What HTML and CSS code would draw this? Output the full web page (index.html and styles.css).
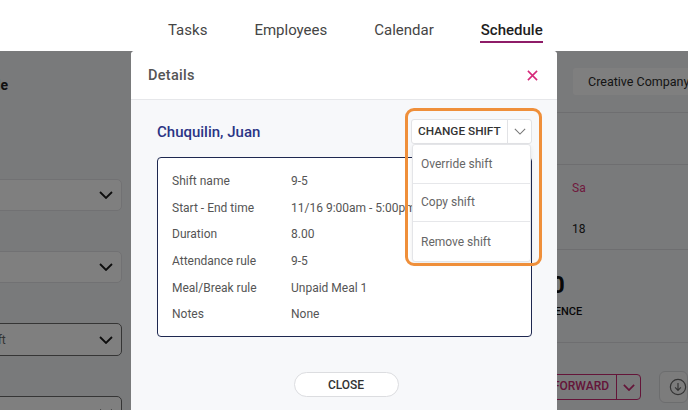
FILE: index.html
```html
<!DOCTYPE html>
<html lang="en">
<head>
<meta charset="utf-8">
<title>Schedule - Details</title>
<link rel="stylesheet" href="styles.css">
</head>
<body>
<div class="app">
  <header class="topnav">
    <nav class="tabs">
      <a class="tab">Tasks</a>
      <a class="tab">Employees</a>
      <a class="tab">Calendar</a>
      <a class="tab active">Schedule</a>
    </nav>
  </header>

  <main class="page">
    <aside class="sidebar">
      <div class="side-title"><span>Employee schedule</span></div>
      <div class="fields">
        <div class="field"><label>Location</label><div class="select"><span></span><svg class="chev" viewBox="0 0 14 8"><path d="M1 1l6 6 6-6"/></svg></div></div>
        <div class="field"><label>Department</label><div class="select"><span></span><svg class="chev" viewBox="0 0 14 8"><path d="M1 1l6 6 6-6"/></svg></div></div>
        <div class="field"><label>Shift</label><div class="select dark"><span>Select shift</span><svg class="chev" viewBox="0 0 14 8"><path d="M1 1l6 6 6-6"/></svg></div></div>
        <div class="field"><label>Rule</label><div class="select dark"><span></span><svg class="chev" viewBox="0 0 14 8"><path d="M1 1l6 6 6-6"/></svg></div></div>
      </div>
    </aside>

    <section class="content">
      <div class="toolbar"><button class="company">Creative Company</button></div>
      <div class="filters"></div>
      <div class="week">
        <div class="day"><span class="dname">Su</span><span class="dnum">12</span></div>
        <div class="day"><span class="dname">Mo</span><span class="dnum">13</span></div>
        <div class="day"><span class="dname">Tu</span><span class="dnum">14</span></div>
        <div class="day"><span class="dname">We</span><span class="dnum">15</span></div>
        <div class="day"><span class="dname">Th</span><span class="dnum">16</span></div>
        <div class="day"><span class="dname">Fr</span><span class="dnum">17</span></div>
        <div class="day"><span class="dname sat">Sa</span><span class="dnum">18</span></div>
      </div>
      <div class="stats">
        <div class="stat"><span class="snum">8</span><span class="slabel">ATTENDANCE</span></div>
        <div class="stat"><span class="snum">0</span><span class="slabel">ABSENCE</span></div>
      </div>
      <div class="actions">
        <div class="split"><span class="split-label">CARRY FORWARD</span><span class="split-arrow"><svg viewBox="0 0 14 8"><path d="M1 1l6 6 6-6"/></svg></span></div>
        <button class="download"><svg viewBox="0 0 20 20"><circle cx="10" cy="10" r="8.5"/><path d="M10 5.5v8M6.8 10.5L10 13.7l3.2-3.2"/></svg></button>
      </div>
    </section>
  </main>

  <div class="overlay"></div>

  <div class="modal">
    <div class="modal-head">
      <h2>Details</h2>
      <svg class="close-x" viewBox="0 0 12 12"><path d="M1 1l10 10M11 1L1 11"/></svg>
    </div>
    <div class="modal-body">
      <div class="name-row">
        <h3 class="emp-name">Chuquilin, Juan</h3>
        <div class="change-btn">
          <span class="change-label">CHANGE SHIFT</span>
          <span class="change-arrow"><svg viewBox="0 0 14 8"><path d="M1 1l6 6 6-6"/></svg></span>
        </div>
      </div>
      <div class="info">
        <div class="row"><span class="lbl">Shift name</span><span class="val">9-5</span></div>
        <div class="row"><span class="lbl">Start - End time</span><span class="val">11/16 9:00am - 5:00pm</span></div>
        <div class="row"><span class="lbl">Duration</span><span class="val">8.00</span></div>
        <div class="row"><span class="lbl">Attendance rule</span><span class="val">9-5</span></div>
        <div class="row"><span class="lbl">Meal/Break rule</span><span class="val">Unpaid Meal 1</span></div>
        <div class="row"><span class="lbl">Notes</span><span class="val">None</span></div>
      </div>
      <div class="foot"><button class="close-btn">CLOSE</button></div>

      <ul class="menu">
        <li>Override shift</li>
        <li>Copy shift</li>
        <li>Remove shift</li>
      </ul>
      <div class="highlight"></div>
    </div>
  </div>
</div>
</body>
</html>
```

FILE: styles.css
```css
* { box-sizing: border-box; }
html, body { margin: 0; padding: 0; }
body {
  font-family: Roboto, "Liberation Sans", Arial, sans-serif;
  background: #fff;
  width: 688px;
  height: 410px;
  overflow: hidden;
}
.app {
  position: relative;
  width: 688px;
  height: 410px;
  overflow: hidden;
}

/* top nav */
.topnav {
  height: 51px;
  background: #fff;
}
.tabs {
  display: flex;
  gap: 47px;
  padding-left: 168px;
  height: 51px;
}
.tab {
  position: relative;
  font-size: 15px;
  color: #454545;
  line-height: 18px;
  padding-top: 21px;
}
.tab.active {
  color: #1e1e1e;
  font-weight: 500;
}
.tab.active::after {
  content: "";
  position: absolute;
  left: -1px;
  right: 0;
  top: 41px;
  height: 2px;
  background: #8e1c68;
}

/* underlying page */
.page {
  display: flex;
  height: 359px;
  background: #f3f4f6;
}
.sidebar {
  flex: 0 0 331px;
  margin-left: -200px;
  padding-right: 9px;
}
.side-title {
  height: 62px;
  display: flex;
  align-items: center;
  justify-content: flex-end;
  padding-top: 6px;
  padding-right: 114px;
  font-size: 14px;
  font-weight: 700;
  color: #222;
  white-space: nowrap;
}
.fields {
  padding-top: 26px;
  padding-left: 20px;
}
.field label {
  display: flex;
  align-items: flex-end;
  height: 40px;
  padding-bottom: 6px;
  font-size: 12px;
  color: #444;
}
.select {
  height: 32px;
  border: 1px solid #e2e3e6;
  border-radius: 5px;
  background: #fff;
  display: flex;
  align-items: center;
  justify-content: space-between;
  padding: 0 8px 0 10px;
  font-size: 12px;
  color: #666;
}
.select.dark { border-color: #6a6a6a; height: 33px; }
.select span { padding-left: 115px; white-space: nowrap; }
.chev {
  width: 14px;
  height: 8px;
  fill: none;
  stroke: #1b1b1b;
  stroke-width: 1.8;
}

.content {
  flex: 1 1 auto;
  min-width: 0;
  display: flex;
  flex-direction: column;
}
.toolbar {
  height: 62px;
  border-bottom: 1px solid #dcdde0;
  padding: 17px 0 0 442px;
}
.company {
  height: 27px;
  width: 140px;
  border: none;
  border-radius: 3px;
  background: #fff;
  font-family: inherit;
  font-size: 12.5px;
  color: #2b2b2b;
  text-align: left;
  padding: 0 0 0 15px;
  white-space: nowrap;
}
.filters {
  height: 52px;
  border-bottom: 1px solid #dcdde0;
}
.week {
  height: 85px;
  border-bottom: 1px solid #dcdde0;
  display: grid;
  grid-template-columns: repeat(7, 62px);
  padding-left: 69px;
}
.day {
  display: flex;
  flex-direction: column;
  padding-top: 15px;
  font-size: 12px;
  color: #222;
}
.dname { height: 16px; line-height: 16px; }
.dname.sat { color: #e0347c; }
.dnum { margin-top: 25px; height: 16px; line-height: 16px; }
.stats {
  height: 93px;
  border-bottom: 1px solid #dcdde0;
  display: flex;
  padding-left: 317px;
  padding-top: 21px;
}
.stat {
  width: 72px;
  display: flex;
  flex-direction: column;
  align-items: center;
  margin-right: 2px;
}
.snum {
  font-size: 24px;
  font-weight: 700;
  color: #111;
  line-height: 28px;
}
.slabel {
  margin-top: 6px;
  font-size: 11px;
  line-height: 13px;
  font-weight: 500;
  color: #111;
}
.actions {
  display: flex;
  align-items: center;
  padding-left: 380px;
  padding-top: 28px;
  gap: 18px;
}
.split {
  display: flex;
  height: 26px;
  width: 131px;
  border: 1.5px solid #c92a72;
  border-radius: 4px;
  color: #c92a72;
}
.split-label {
  flex: 1;
  font-size: 12px;
  font-weight: 500;
  line-height: 23px;
  text-align: right;
  padding-right: 7px;
  white-space: nowrap;
}
.split-arrow {
  width: 24px;
  border-left: 1.5px solid #c92a72;
  display: flex;
  align-items: center;
  justify-content: center;
}
.split-arrow svg {
  width: 12px;
  height: 7px;
  fill: none;
  stroke: #c92a72;
  stroke-width: 2;
}
.download {
  width: 44px;
  height: 32px;
  border: 1px solid #d9dadd;
  border-radius: 6px;
  background: #f8f8f9;
  padding: 0 0 0 9px;
  display: flex;
  align-items: center;
}
.download svg {
  width: 18px;
  height: 18px;
  fill: none;
  stroke: #666;
  stroke-width: 1.3;
}

.overlay {
  position: absolute;
  left: 0;
  top: 51px;
  right: 0;
  bottom: 0;
  background: rgba(0, 0, 0, 0.5);
}

/* modal */
.modal {
  position: absolute;
  left: 131px;
  top: 51px;
  width: 426px;
  height: 390px;
  background: #f7f8fa;
  border-radius: 4px 4px 0 0;
}
.modal-head {
  height: 49px;
  background: #fff;
  border-bottom: 1px solid #e6e7ea;
  border-radius: 4px 4px 0 0;
  display: flex;
  align-items: center;
  justify-content: space-between;
  padding: 1px 19px 0 17px;
}
.modal-head h2 {
  margin: 0;
  font-size: 14.5px;
  font-weight: 500;
  letter-spacing: 0.3px;
  color: #555;
}
.close-x {
  width: 11px;
  height: 11px;
  fill: none;
  stroke: #d6287a;
  stroke-width: 1.7;
}
.modal-body {
  position: relative;
  padding: 19px 24px 0 26px;
}
.name-row {
  display: flex;
  align-items: center;
  justify-content: space-between;
  height: 25px;
}
.emp-name {
  margin: 0;
  font-size: 15px;
  font-weight: 500;
  color: #2b3485;
}
.change-btn {
  display: flex;
  height: 25px;
  width: 121px;
  margin-right: 1px;
  background: #fff;
  border: 1px solid #e2e3e6;
  border-radius: 3px;
}
.change-label {
  flex: 1;
  font-size: 11.8px;
  font-weight: 500;
  color: #333;
  line-height: 23px;
  padding-left: 6px;
  white-space: nowrap;
}
.change-arrow {
  width: 24px;
  border-left: 1px solid #e2e3e6;
  display: flex;
  align-items: center;
  justify-content: center;
}
.change-arrow svg {
  width: 12px;
  height: 7px;
  fill: none;
  stroke: #777;
  stroke-width: 1.3;
}
.info {
  margin-top: 13px;
  height: 180px;
  margin-right: 1px;
  border: 1px solid #1e2850;
  border-radius: 4px;
  background: #fff;
  padding: 10px 14px;
}
.row {
  display: flex;
  height: 26.6px;
  align-items: center;
  font-size: 12px;
  color: #555;
}
.lbl { width: 119px; flex: 0 0 119px; }
.val { white-space: nowrap; }
.foot {
  display: flex;
  justify-content: center;
  padding-top: 35px;
  padding-left: 2px;
}
.close-btn {
  width: 105px;
  height: 25px;
  border: 1px solid #dcdde0;
  border-radius: 13px;
  background: #fff;
  font-family: inherit;
  font-size: 12px;
  font-weight: 500;
  color: #333;
}

.menu {
  position: absolute;
  left: 281px;
  top: 44px;
  width: 119px;
  margin: 0;
  padding: 0;
  list-style: none;
  background: #fff;
  border: 1px solid #e4e5e8;
  border-radius: 3px;
  box-shadow: 0 2px 4px rgba(0, 0, 0, 0.08);
}
.menu li {
  height: 38.5px;
  display: flex;
  align-items: center;
  padding-left: 8px;
  font-size: 12px;
  color: #666;
  border-bottom: 1px solid #e6e7ea;
}
.menu li:last-child { border-bottom: none; height: 39px; }
.highlight {
  position: absolute;
  left: 274px;
  top: 8px;
  width: 137px;
  height: 158px;
  border: 3px solid #ef8f3a;
  border-radius: 9px;
}
```
